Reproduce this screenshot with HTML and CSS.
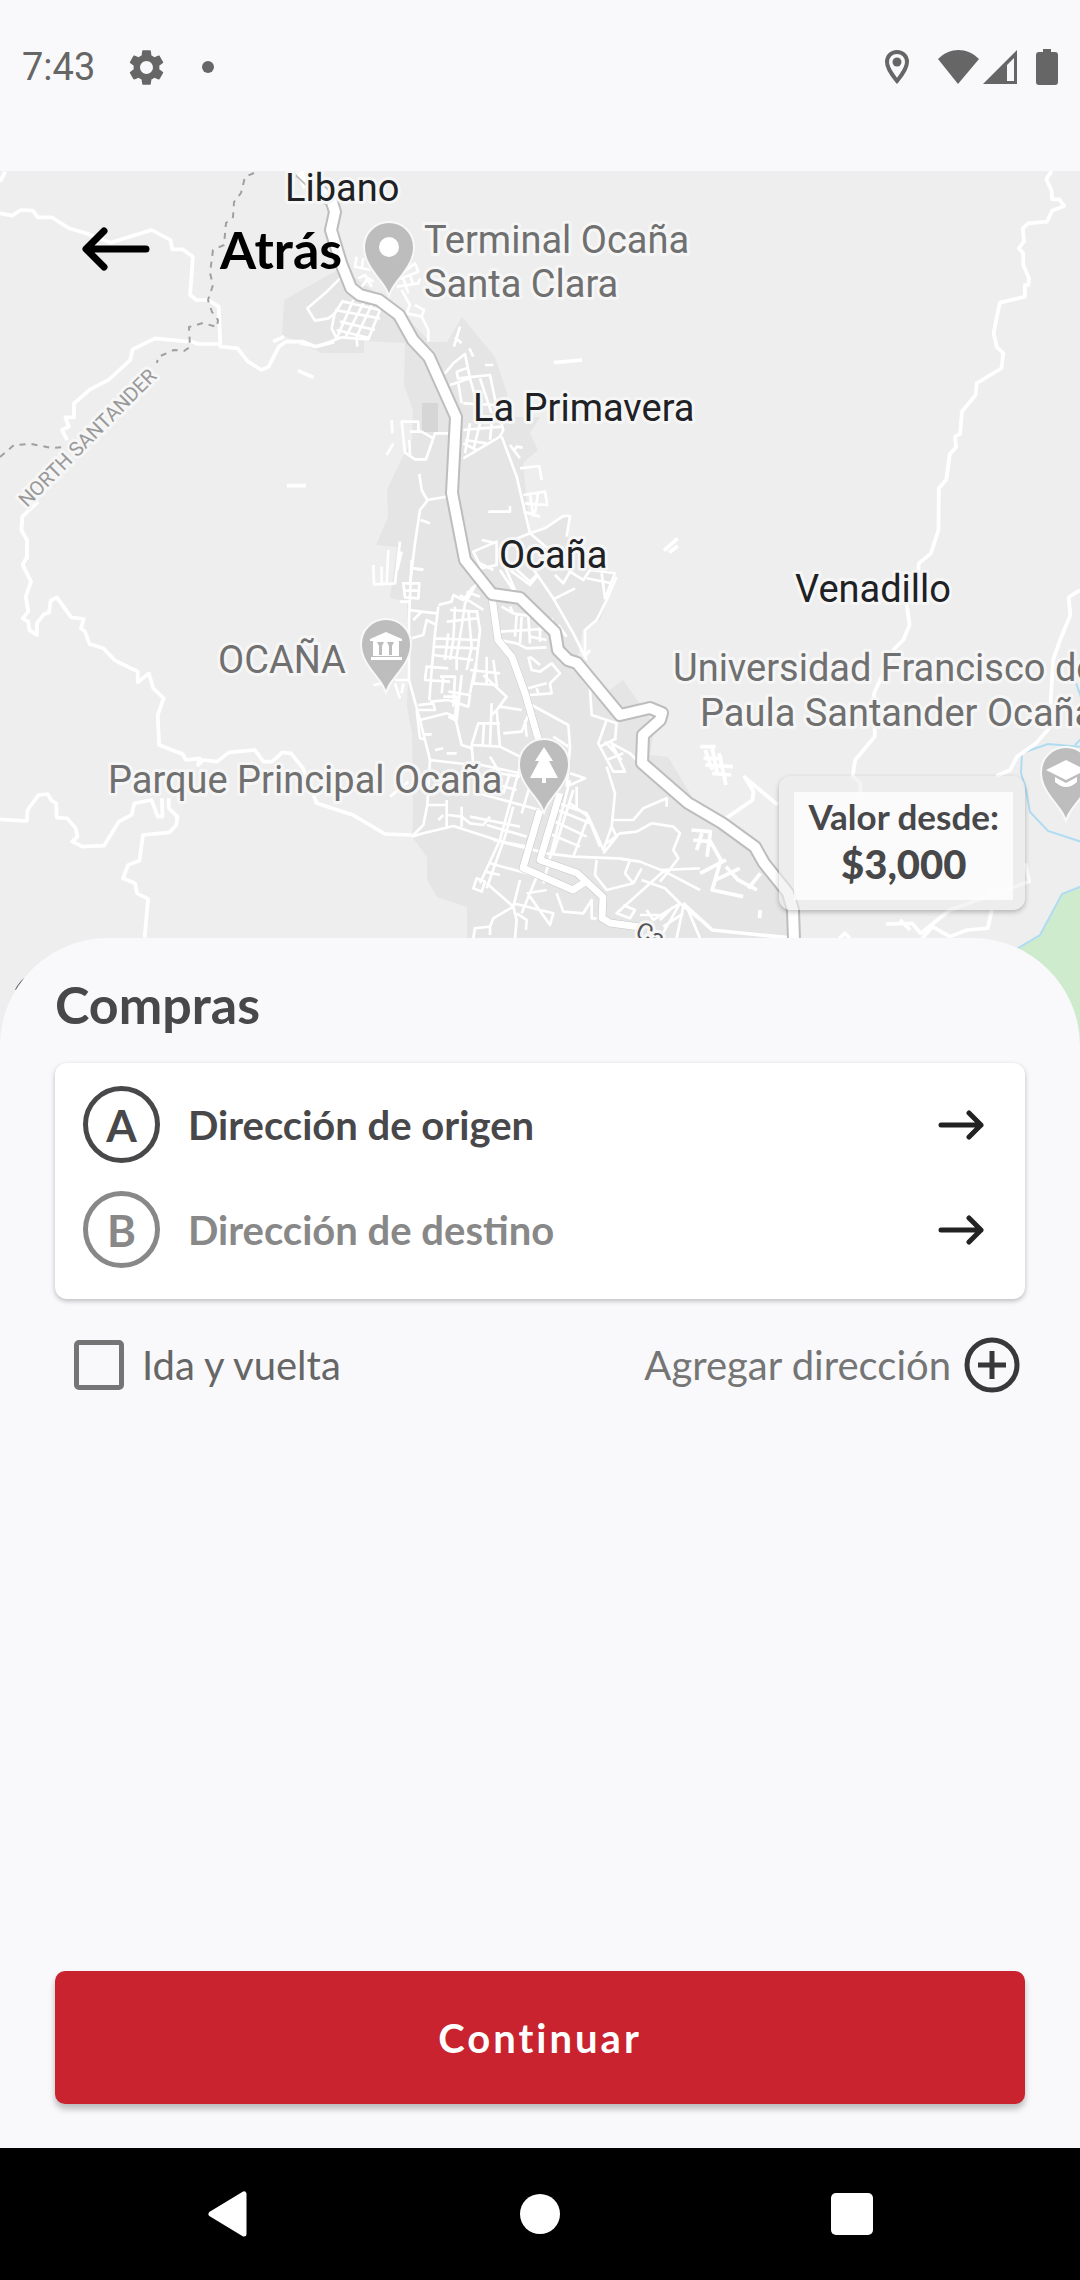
FILE: index.html
```html
<!DOCTYPE html>
<html lang="es">
<head>
    <meta charset="UTF-8">
    <meta name="viewport" content="width=device-width, initial-scale=1.0">
    <title>Compras</title>
    <link rel="stylesheet" href="styles.css">
</head>
<body>
    <header class="status-bar">
        <div class="status-left">
            <span>7:43</span>
            <svg class="gear" viewBox="0 0 24 24"><path d="M19.14 12.94c.04-.3.06-.61.06-.94 0-.32-.02-.64-.07-.94l2.03-1.58c.18-.14.23-.41.12-.61l-1.92-3.32c-.12-.22-.37-.29-.59-.22l-2.39.96c-.5-.38-1.03-.7-1.62-.94l-.36-2.54c-.04-.24-.24-.41-.48-.41h-3.84c-.24 0-.43.17-.47.41l-.36 2.54c-.59.24-1.13.57-1.62.94l-2.39-.96c-.22-.08-.47 0-.59.22L2.74 8.87c-.12.21-.08.47.12.61l2.03 1.58c-.05.3-.09.63-.09.94s.02.64.07.94l-2.03 1.58c-.18.14-.23.41-.12.61l1.92 3.32c.12.22.37.29.59.22l2.39-.96c.5.38 1.03.7 1.62.94l.36 2.54c.05.24.24.41.48.41h3.84c.24 0 .44-.17.47-.41l.36-2.54c.59-.24 1.13-.56 1.62-.94l2.39.96c.22.08.47 0 .59-.22l1.92-3.32c.12-.22.07-.47-.12-.61l-2.01-1.58zM12 15.6c-1.98 0-3.6-1.62-3.6-3.6s1.62-3.6 3.6-3.6 3.6 1.62 3.6 3.6-1.62 3.6-3.6 3.6z"/></svg>
            <i class="dot"></i>
        </div>
        <div class="status-right">
            <svg class="location" width="26" height="36" viewBox="0 0 26 36"><path d="M13 3C7 3 3 7.500 3 13c0 7 10 19 10 19s10-12 10-19C23 7.500 19 3 13 3z" fill="none" stroke="#666" stroke-width="4"/><circle cx="13" cy="13" r="4.500"/></svg>
            <svg width="80" height="36" viewBox="0 0 80 36"><path d="M0 10C12-2 29-2 41 10L20 35z"/><path fill-rule="evenodd" d="M79 1v34H45zM76 9v23h-7V16z"/></svg>
            <svg width="22" height="36" viewBox="0 0 22 36"><path d="M7 0h8v3h4q3 0 3 3v27q0 3-3 3H3q-3 0-3-3V6q0-3 3-3h4z"/></svg>
        </div>
    </header>

    <main>
        <section class="map-box">
            <svg class="map" viewBox="0 171 1080 875">
                <defs>
                    <g id="pin">
                        <path d="M0 46C-5 32-24 20-24 0a24 24 0 0 1 48 0C24 20 5 32 0 46z" fill="#bdbdbd" stroke="#f8f8f8" stroke-width="4" paint-order="stroke"/>
                    </g>
                </defs>
                <rect y="171" width="1080" height="875" fill="#eee"/>

                <!-- zona urbana -->
                <path fill="#e5e5e5" d="M341 268L284 300 282 335 322 353H364V341L405 343 404 385 413 410 412 440 402 458 387 490 388 517 376 545 397 547 390 598 407 602 408 680 407 707 412 733 413 815 412 837 427 857V880L437 897 467 907V938H794L793 910 781 887 755 847 700 810 688 790 668 757 650 755 655 725 623 680 607 692 577 663 583 630 600 620 617 575 590 560 568 540 570 515 550 525 530 533 523 463 538 450 530 433 540 417H507V393L495 357 462 317 447 342 430 342 400 310z"/>
                <path fill="#d6d6d6" d="M422 403h16v29h-16z"/>

                <!-- parque y rio -->
                <path fill="#ceebcd" stroke="#b0dcf2" stroke-width="2" d="M1082 886L1062 894 1040 935 1010 953 1030 1048H1082z"/>
                <path fill="none" stroke="#b0dcf2" stroke-width="2" d="M1082 842L1048 831 1030 812 1026 790 1021 773 1022 753 1048 744 1082 747M1076 683L1082 700M1075 745L1082 738"/>

                <g class="roads">
                    <g transform="translate(0 160) scale(.3444 .3333)">
                        <path d="M15 35L0 65M0 160L35 167 60 150 95 152 110 172H150L200 205 250 220 320 248 440 210 495 240 500 268H530L560 290 552 405 570 420H605L635 440 640 560 690 565 720 605 760 630 780 620 810 560 830 545H880L915 560 970 545M545 540L575 552H640M545 545L450 535 385 568 378 600 315 660 262 688 215 730V772H190L200 800 180 810 195 840M110 1025L65 1070 62 1110 78 1140V1200M865 632L910 652M833 977H888M793 545L825 530M865 35L885 85"/>
                    </g>
                    <g transform="translate(540 160) scale(.3444 .3333)">
                        <path d="M1485 33L1470 58 1485 90 1487 118H1508L1522 138 1487 152 1472 185 1418 190 1402 205 1405 245 1390 265 1403 280V315L1420 355 1418 375H1408V410L1335 428 1317 520 1327 562 1345 580 1340 625 1268 670 1265 705 1225 755 1220 822 1205 830 1208 862 1190 882 1180 958 1158 985 1157 1110 1135 1180 1100 1210 1098 1235M40 608L122 600M360 1172L400 1135M375 1178L400 1158"/>
                    </g>
                    <g transform="translate(0 540) scale(.3444 .3333)">
                        <path d="M78 0V50L66 75 90 125 75 170 82 215 66 235 82 245 85 270 107 285V250L128 222 142 218 147 182 165 172 207 232 243 237 235 265 247 275 260 312 300 325 335 362 400 395V427L432 400 445 445 475 475 458 525 462 615 530 642 540 660 580 655 575 675 590 660 630 665 665 637 740 630 765 665H790L820 637 845 640 880 685 920 790 1025 825 1118 882 1195 885M0 838L78 843 80 810 112 765 138 762 150 782 163 790 165 833 195 835 220 865 225 890 210 905 240 920 302 917 345 845 382 825 390 790 440 780 458 830H472L470 775M490 775V805L515 830 512 855 492 877 415 885 405 962 372 975 357 1015 392 1030 398 1060 430 1077 420 1193"/>
                    </g>
                    <g transform="translate(540 540) scale(.3444 .3333)">
                        <path d="M1065 195L1073 255 1055 300 1030 325 970 460 972 590 915 660 908 708 930 730V765L850 850M1568 150L1535 172 1540 225 1510 300 1490 360 1478 565 1440 610 1385 650 1365 690 1325 708M690 795L595 712 620 755 617 780 540 835 500 845 485 810M1005 1152L1080 1150 1105 1180 1190 1110 1420 1025 1410 970M1045 1140L1075 1170M1110 1195L1140 1160 1190 1190 1240 1170 1300 1165 1312 1110M1300 1035L1320 1070M870 1195L885 1180 900 1195M465 620H510M480 630L500 690M500 625L515 700M520 640L540 735M475 655H530M480 675L560 680M500 700L555 705M440 870L495 875 485 950M455 930L470 880M445 900L495 905 525 960 500 1050 590 1070M540 980L575 1020 630 1050M510 1020L580 985M640 1000L605 1045M640 1110L637 1135M415 1090L500 1170 640 1185 720 1193M465 1000L540 960"/>
                    </g>
                </g>

                <!-- calles del casco urbano -->
                <g class="streets">
                    <g transform="translate(300 250) scale(.3333)">
                        <path d="M0 280L50 290 125 262 205 268 240 180M120 85L75 130 22 175 45 212 85 205 105 190 130 150M105 185L95 235 110 265 160 150M135 265L190 160M165 270L215 165M105 180L240 205M130 155L240 180M120 215L225 240M110 240L210 265M170 265L172 290M170 20L165 50 210 60M190 25L185 55M175 85L195 75 215 110M185 110L205 85 220 95"/>
                        <path d="M300 75L345 40 355 65 290 90M290 110L355 100 360 85M305 120L330 165 320 190 365 200 372 180 345 165M365 200L385 240V275M310 85L325 130M330 75L340 105M480 230L462 290M465 262L485 280M508 295L520 320M555 345H580"/>
                        <path d="M435 370L460 340 495 312 510 385 450 405M470 365L500 355M475 385L570 375 590 470 610 540 600 560 490 625M510 385L545 510M540 385L575 490M475 400L485 460M470 365L475 390M490 460L590 465M490 540L605 530M495 570L560 580M510 520L495 610M540 520L520 600M575 520L570 570M490 580L530 600"/>
                        <path d="M605 560L650 680 690 850M630 585L660 625M640 605L650 590 668 593M660 655L718 648 725 690M565 785H630V768M670 735L735 725 742 765 675 760M670 785L720 800M690 730L700 800M715 725L705 790M690 850L735 835 790 798H810L800 860M690 850L755 905M690 850L640 870"/>
                        <path d="M275 510L277 550M280 580L260 615M330 545H365L400 565 378 628H345L315 608 305 515H355V545M328 570L330 615M400 565L405 550H450M358 672L365 720 382 750 440 740M382 752L360 780 345 880 330 1000M362 810L390 820M335 955L370 960M300 875L285 1000 222 1003 220 945M265 900L260 1000M245 950V1000M305 905L292 960"/>
                        <path d="M520 905L590 875V945L545 955zM545 870L590 880M540 940L580 960M600 960L640 1020M630 960L690 1005 710 980M765 975L790 1000 810 965 850 990 870 960 945 970 915 1045 905 970M860 985L935 1000"/>
                    </g>
                    <g transform="translate(340 560) scale(.3333)">
                        <path d="M215 0L207 180V360L240 480 270 600 262 735 250 795 215 830M180 125H207M215 25L250 28M190 70H238L235 115 195 112zM190 92H236M207 150L245 155 290 160M220 180L245 155M215 235L250 225 260 180 290 195M100 375L130 370M165 360H207M165 370L180 415M190 370L185 400M150 710L205 665"/>
                        <path d="M295 140L285 220 275 330 268 420M325 220L315 300M345 140L340 240 330 300M410 70L375 130 365 200 350 290V330M410 150L420 210 410 300 390 400M385 150L395 260 380 330M295 135L335 125 340 105 370 120 400 80M330 150L410 155M320 185L410 175M285 235L415 240M285 260L410 265M280 285L400 300M325 325L260 320 255 360 330 365M300 350H345L340 440M360 105L430 150M380 95L420 110M270 425L325 420 385 440 390 405 325 395M235 435L280 430 285 450 235 450"/>
                        <path d="M240 480L320 460 345 470 365 555 395 565M310 350L305 400M310 410L350 410 345 480 325 470M365 345L350 480M390 330L480 340M395 370L475 375M410 310L400 370M440 290V370M460 300L470 370M430 345L500 410 470 450 480 560 395 555 415 490H480M455 430L450 560M432 490L428 560M480 440L545 450M480 440L455 465M575 435L685 495 690 560 680 680M490 520L545 515 575 440M555 480L560 530M230 450L240 535 255 538M250 523H275"/>
                        <path d="M565 290L575 330 600 335 635 310 660 340 630 370 635 400 570 405M565 385L620 370M590 385L595 400M570 290L600 315M495 20L525 90M520 20L570 65 590 45M575 20L640 115 700 220 740 300M640 118L705 85M830 50L800 120 770 180 735 210V290L750 270M725 350L750 385 755 465 800 480 775 550 820 635H855L815 550 870 580 890 600M795 545L845 600M780 560L830 535M800 600L850 580"/>
                        <path d="M530 165L525 230M545 170L540 250M480 215L640 205M480 240L530 250 560 265 620 262M565 170L570 250M600 190V245M570 230L620 240M485 140L520 160 510 140M520 160L640 180M655 195L680 230M800 480L830 490 825 540M800 620L825 700 815 800 790 870 775 835 745 770 690 730M820 780H880L910 745 980 715V740M800 850L840 820 890 815 935 790 1000 800 1020 820 1000 870 1015 895 985 935 960 965M790 880L830 830 815 800"/>
                        <path d="M270 600L400 615M285 570L310 565M320 580H350M320 720V800M365 740V800M325 765L365 770 390 790 430 795 450 770M262 735L320 735M295 780L310 765M215 830L250 820 340 798 500 850 620 880 700 890 830 895 900 905 975 935 1080 990"/>
                        <path d="M540 620L480 840 420 970M520 740L495 830 440 985M690 660L610 970M700 690L640 880M745 770L700 890M575 660L545 760M710 680V740M400 610L540 640M420 660L530 690M415 700L600 750M390 770L540 800M640 745L750 790M635 780L740 830M625 820L720 860M440 795L560 830M460 840L560 860M655 730L740 760 780 860M480 560L540 590M450 590L480 640 540 650M395 555L400 620M510 640L490 700M690 640L735 655 680 680M685 560L640 530"/>
                        <path d="M410 955L400 985 425 995 435 965zM450 910L560 940 620 960M440 970L520 1040 540 960M435 935L480 945M520 1040L460 1075 450 1100 405 1105 400 1135M520 1040L530 1080 525 1135M530 1060L560 1080 558 1110M520 1030L640 1060 630 1095 570 1010M590 950L545 1060M650 1000L670 1055 730 1060 755 1020V1075H770M640 960L700 990M560 1000L620 990M450 1100V1125"/>
                        <path d="M770 900L765 945 800 990 880 970 855 940 870 900 835 895M880 970L905 925M905 960L975 985 1020 1030 960 1135M975 930L830 1060 870 1075 885 1050 850 1035M1020 1030L1080 1080M1020 1030L940 1080 920 1050M900 1065H960M1030 1040L1010 1135M1040 1040L1080 1135M960 1080L1000 1040M970 1100L1030 1060M960 930L1080 925"/>
                    </g>
                </g>

                <path class="border" d="M254 173L245 177 241 193 234 202 233 217 226 223 224 245 213 250 210 273 213 285 208 300 212 312 218 320 217 327 203 323 189 327 190 347 184 351 174 350 158 357 157 363M0 457L14 445 31 444 52 448 64 447"/>

                <g class="avenue">
                    <path d="M492 597L498 640 512 657 525 693 540 745M540 810L523 868 573 890 585 882M560 793L540 860 577 873 603 897 602 918 610 923 640 927"/>
                    <path class="fill" d="M492 597L498 640 512 657 525 693 540 745M540 810L523 868 573 890 585 882M560 793L540 860 577 873 603 897 602 918 610 923 640 927"/>
                </g>
                <g class="highway">
                    <path d="M300 171L320 190 332 202 335 212 331 230 341 263 351 288 360 295 379 300 399 315 413 340 429 357 456 417 452 493 465 560 492 594 520 598 555 632 558 650 568 660 577 663 620 715 650 708 662 713 660 720 643 735 642 763 673 790 688 803 722 823 755 847 764 863 788 893 793 910 794 940"/>
                    <path class="fill" d="M300 171L320 190 332 202 335 212 331 230 341 263 351 288 360 295 379 300 399 315 413 340 429 357 456 417 452 493 465 560 492 594 520 598 555 632 558 650 568 660 577 663 620 715 650 708 662 713 660 720 643 735 642 763 673 790 688 803 722 823 755 847 764 863 788 893 793 910 794 940"/>
                </g>

                <g fill="#fff">
                    <use href="#pin" x="389" y="247"/>
                    <circle cx="389" cy="247" r="10"/>
                    <use href="#pin" x="386" y="644"/>
                    <path d="M386 632l16 7v2h-32v-2zM373 641h26v15h-26zM371 657h31v3h-31z"/>
                    <path fill="#bdbdbd" d="M377 642h7l-2 4v9h-3v-9zM387 642h7l-2 4v9h-3v-9z"/>
                    <use href="#pin" x="544" y="764"/>
                    <path d="M544 747l9 14h-4l9 17h-12v5h-4v-5h-12l9-17h-4z"/>
                    <use href="#pin" x="1066" y="772"/>
                    <path d="M1066 760l20 10-20 10-20-10zM1055 777l11 6 11-6v5q-11 10-22 0z"/>
                </g>

                <g class="labels">
                    <g class="place">
                        <text x="285" y="201">Libano</text>
                        <text x="473" y="421">La Primavera</text>
                        <text x="499" y="568">Ocaña</text>
                        <text x="795" y="602">Venadillo</text>
                    </g>
                    <text x="424" y="253">Terminal Ocaña</text>
                    <text x="424" y="297">Santa Clara</text>
                    <text x="218" y="673">OCAÑA</text>
                    <text x="108" y="793">Parque Principal Ocaña</text>
                    <text x="673" y="681">Universidad Francisco de</text>
                    <text x="700" y="726">Paula Santander Ocaña</text>
                    <text class="region" transform="translate(27 508) rotate(-45)">NORTH SANTANDER</text>
                    <text class="street-name" transform="translate(634 936) rotate(25)">Ca</text>
                </g>
                <path d="M16 990Q20 982 26 978" fill="none" stroke="#555" stroke-width="2"/>
            </svg>

            <button class="back" type="button">
                <svg width="68" height="44" viewBox="0 0 68 44"><path d="M64 22H5M22 4L4 22l18 18"/></svg>
                Atrás
            </button>

            <div class="price">
                <div class="price-inner">
                    <span>Valor desde:</span>
                    <strong>$3,000</strong>
                </div>
            </div>
        </section>

        <section class="sheet">
            <h1>Compras</h1>

            <div class="card">
                <button class="address" type="button">
                    <span class="letter">A</span>
                    <span class="text">Dirección de origen</span>
                    <svg width="46" height="32" viewBox="0 0 46 32"><path d="M3 16h40M31 4l12 12-12 12"/></svg>
                </button>
                <button class="address pending" type="button">
                    <span class="letter">B</span>
                    <span class="text">Dirección de destino</span>
                    <svg width="46" height="32" viewBox="0 0 46 32"><path d="M3 16h40M31 4l12 12-12 12"/></svg>
                </button>
            </div>

            <div class="options">
                <label class="check" for="ida"><input type="checkbox" id="ida"> Ida y vuelta</label>
                <button class="add" type="button">
                    Agregar dirección
                    <svg width="56" height="56" viewBox="0 0 56 56"><circle cx="28" cy="28" r="25"/><path d="M28 14v28M14 28h28"/></svg>
                </button>
            </div>

            <button class="continue" type="button">Continuar</button>
        </section>
    </main>

    <nav class="nav-bar">
        <button type="button" aria-label="Volver"><svg width="44" height="48" viewBox="0 0 44 48"><path d="M38 4v40L5 24z" stroke="#fff" stroke-width="5" stroke-linejoin="round"/></svg></button>
        <button type="button" aria-label="Inicio"><svg width="40" height="40" viewBox="0 0 40 40"><circle cx="20" cy="20" r="20"/></svg></button>
        <button type="button" aria-label="Recientes"><svg width="42" height="42" viewBox="0 0 42 42"><rect width="42" height="42" rx="5"/></svg></button>
    </nav>
</body>
</html>
```
FILE: styles.css
```css
* {
    box-sizing: border-box;
}

body {
    margin: 0;
    min-height: 100vh;
    display: flex;
    flex-direction: column;
    background-color: #f9f9fb;
    color: #48484a;
    font-family: Lato, "Open Sans", sans-serif;
}

button {
    border: none;
    padding: 0;
    background: none;
    color: inherit;
    font-family: inherit;
    cursor: pointer;
}

svg {
    display: block;
}

/* barra de estado */
.status-bar {
    display: flex;
    justify-content: space-between;
    padding: 44px 22px 81px;
}

.status-left,
.status-right {
    display: flex;
    align-items: center;
    height: 46px;
    gap: 18px;
}

.status-left {
    font-family: Roboto, sans-serif;
    font-size: 38px;
    color: #666;
    gap: 30px;
}

.status-bar svg {
    fill: #666;
}

.gear {
    width: 43px;
    height: 43px;
}

.dot {
    width: 12px;
    height: 12px;
    margin-left: 4px;
    border-radius: 50%;
    background-color: #666;
}

.location {
    margin-right: 10px;
}

/* mapa */
main {
    flex: 1;
    display: flex;
    flex-direction: column;
}

.map-box {
    position: relative;
}

.map {
    width: 100%;
    height: auto;
}

.roads,
.streets,
.border,
.avenue,
.highway {
    fill: none;
    stroke: #fff;
    stroke-width: 11;
    stroke-linejoin: round;
}

.streets {
    stroke-width: 8;
}

.border {
    stroke: #a0a0a0;
    stroke-width: 2;
    stroke-dasharray: 6 6;
}

.avenue {
    stroke: #c8c8c8;
    stroke-width: 8;
}

.avenue .fill {
    stroke: #fff;
    stroke-width: 7;
}

.highway {
    stroke: #bdbdbd;
    stroke-width: 14;
}

.highway .fill {
    stroke: #fff;
    stroke-width: 10;
}

.labels {
    font-family: Roboto, sans-serif;
    font-size: 38px;
    fill: #707070;
    stroke: #f6f6f6;
    stroke-width: 6;
    stroke-linejoin: round;
    paint-order: stroke;
}

.place {
    fill: #202124;
}

.region {
    font-size: 20px;
    fill: #999;
}

.street-name {
    font-size: 24px;
    fill: #555;
}

.back {
    position: absolute;
    top: 46px;
    left: 82px;
    display: flex;
    align-items: center;
    gap: 70px;
    color: #000;
    font-size: 52px;
    line-height: 64px;
    font-weight: bold;
}

.back svg {
    fill: none;
    stroke: #000;
    stroke-width: 7;
    stroke-linecap: round;
    stroke-linejoin: round;
}

.price {
    position: absolute;
    right: 55px;
    bottom: 136px;
    padding: 16px 12px 10px 15px;
    border-radius: 12px;
    background-color: rgba(236, 236, 236, 0.6);
    box-shadow: 0 2px 5px rgba(0, 0, 0, 0.25);
}

.price-inner {
    display: flex;
    flex-direction: column;
    align-items: center;
    padding: 0 14px 12px;
    background-color: rgba(255, 255, 255, 0.75);
    font-size: 35px;
    line-height: 48px;
    font-weight: bold;
}

.price-inner strong {
    font-size: 40px;
}

/* panel inferior */
.sheet {
    position: relative;
    flex: 1;
    display: flex;
    flex-direction: column;
    margin-top: -108px;
    padding: 34px 55px 44px;
    border-radius: 108px 108px 0 0;
    background-color: #f9f9fb;
}

h1 {
    margin: 0 0 27px;
    font-size: 52px;
    line-height: 64px;
}

.card {
    padding: 9px 28px 17px;
    border-radius: 12px;
    background-color: #fff;
    box-shadow: 0 2px 5px rgba(0, 0, 0, 0.25);
}

.address {
    display: flex;
    align-items: center;
    width: 100%;
    height: 105px;
    padding-right: 13px;
    font-size: 40px;
    font-weight: bold;
    text-align: left;
}

.address .text {
    flex: 1;
}

.letter {
    display: flex;
    align-items: center;
    justify-content: center;
    width: 77px;
    height: 77px;
    margin-right: 28px;
    border: 5px solid currentColor;
    border-radius: 50%;
    font-size: 44px;
}

.address svg {
    fill: none;
    stroke: #222;
    stroke-width: 5;
    stroke-linecap: round;
    stroke-linejoin: round;
}

.pending {
    color: #888;
}

.options {
    display: flex;
    justify-content: space-between;
    align-items: center;
    margin-top: 38px;
    padding: 0 5px 0 19px;
    font-size: 40px;
}

.check {
    display: flex;
    align-items: center;
    gap: 18px;
    color: #666;
}

.check input {
    appearance: none;
    width: 50px;
    height: 50px;
    margin: 0;
    border: 5px solid #757575;
    border-radius: 5px;
}

.add {
    display: flex;
    align-items: center;
    gap: 13px;
    color: #757575;
    font-size: 40px;
}

.add svg {
    fill: none;
    stroke: #38383a;
    stroke-width: 5;
}

.continue {
    height: 133px;
    margin-top: auto;
    border-radius: 10px;
    background-color: #c8232f;
    box-shadow: 0 5px 6px rgba(0, 0, 0, 0.25);
    color: #fff;
    font-size: 40px;
    font-weight: bold;
    letter-spacing: 3px;
}

/* botones del sistema */
.nav-bar {
    display: flex;
    justify-content: space-around;
    padding: 0 72px;
    background-color: #000;
}

.nav-bar button {
    display: flex;
    align-items: center;
    justify-content: center;
    width: 132px;
    height: 132px;
}

.nav-bar svg {
    fill: #fff;
}
```
